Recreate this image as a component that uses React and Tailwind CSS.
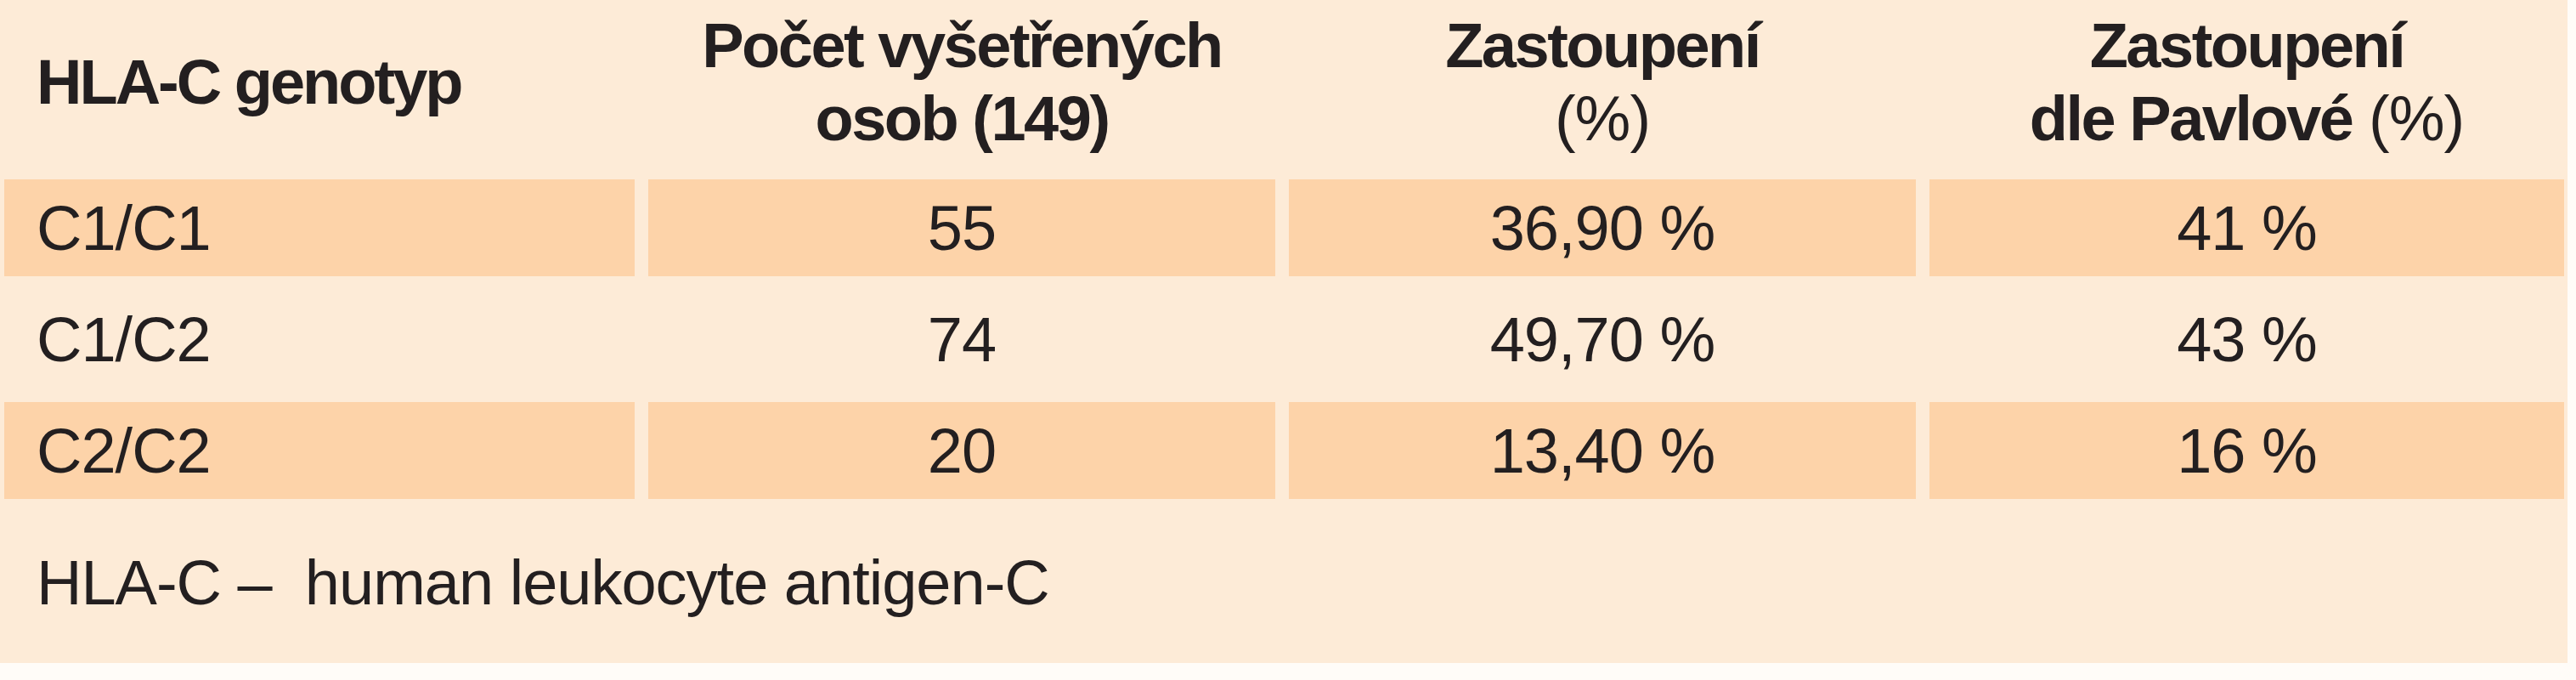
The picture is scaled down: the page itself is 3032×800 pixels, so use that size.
export default function App() {
  const rows = [
    ["C1/C1", "55", "36,90 %", "41 %"],
    ["C1/C2", "74", "49,70 %", "43 %"],
    ["C2/C2", "20", "13,40 %", "16 %"],
  ];
  return (
    <div className="w-full h-[800px] bg-[#fffcf8]">
      <div
        className="w-[3022px] h-[780px] bg-[#fdebd7] pl-[5px] text-[#231f20] text-[74px] tracking-[-1px]"
        style={{ fontFamily: '"Liberation Sans", Arial, sans-serif' }}
      >
        <div className="grid grid-cols-[742px_738px_738px_747px] gap-x-[16px] gap-y-[17px] grid-rows-[194px_114px_114px_114px]">
          <div className="flex items-center pl-[38px] font-bold leading-[86px] tracking-[-3px]">HLA-C genotyp</div>
          <div className="flex flex-col items-center justify-center font-bold leading-[86px] text-center tracking-[-2.5px]">
            <span>Počet vyšetřených</span>
            <span>osob (149)</span>
          </div>
          <div className="flex flex-col items-center justify-center leading-[86px] text-center">
            <span className="font-bold tracking-[-2.5px]">Zastoupení</span>
            <span>(%)</span>
          </div>
          <div className="flex flex-col items-center justify-center leading-[86px] text-center">
            <span className="font-bold tracking-[-2.5px]">Zastoupení</span>
            <span>
              <span className="font-bold tracking-[-2.5px]">dle Pavlové</span> (%)
            </span>
          </div>
          {rows.map((r, i) => {
            const band = i !== 1 ? "bg-[#fdd3a9]" : "";
            return [
              <div key={i + "a"} className={`flex items-center pl-[38px] ${band}`}>{r[0]}</div>,
              <div key={i + "b"} className={`flex items-center justify-center ${band}`}>{r[1]}</div>,
              <div key={i + "c"} className={`flex items-center justify-center ${band}`}>{r[2]}</div>,
              <div key={i + "d"} className={`flex items-center justify-center ${band}`}>{r[3]}</div>,
            ];
          })}
        </div>
        <div className="pt-[62px] pl-[38px] leading-none">HLA-C –&nbsp; human leukocyte antigen-C</div>
      </div>
    </div>
  );
}
